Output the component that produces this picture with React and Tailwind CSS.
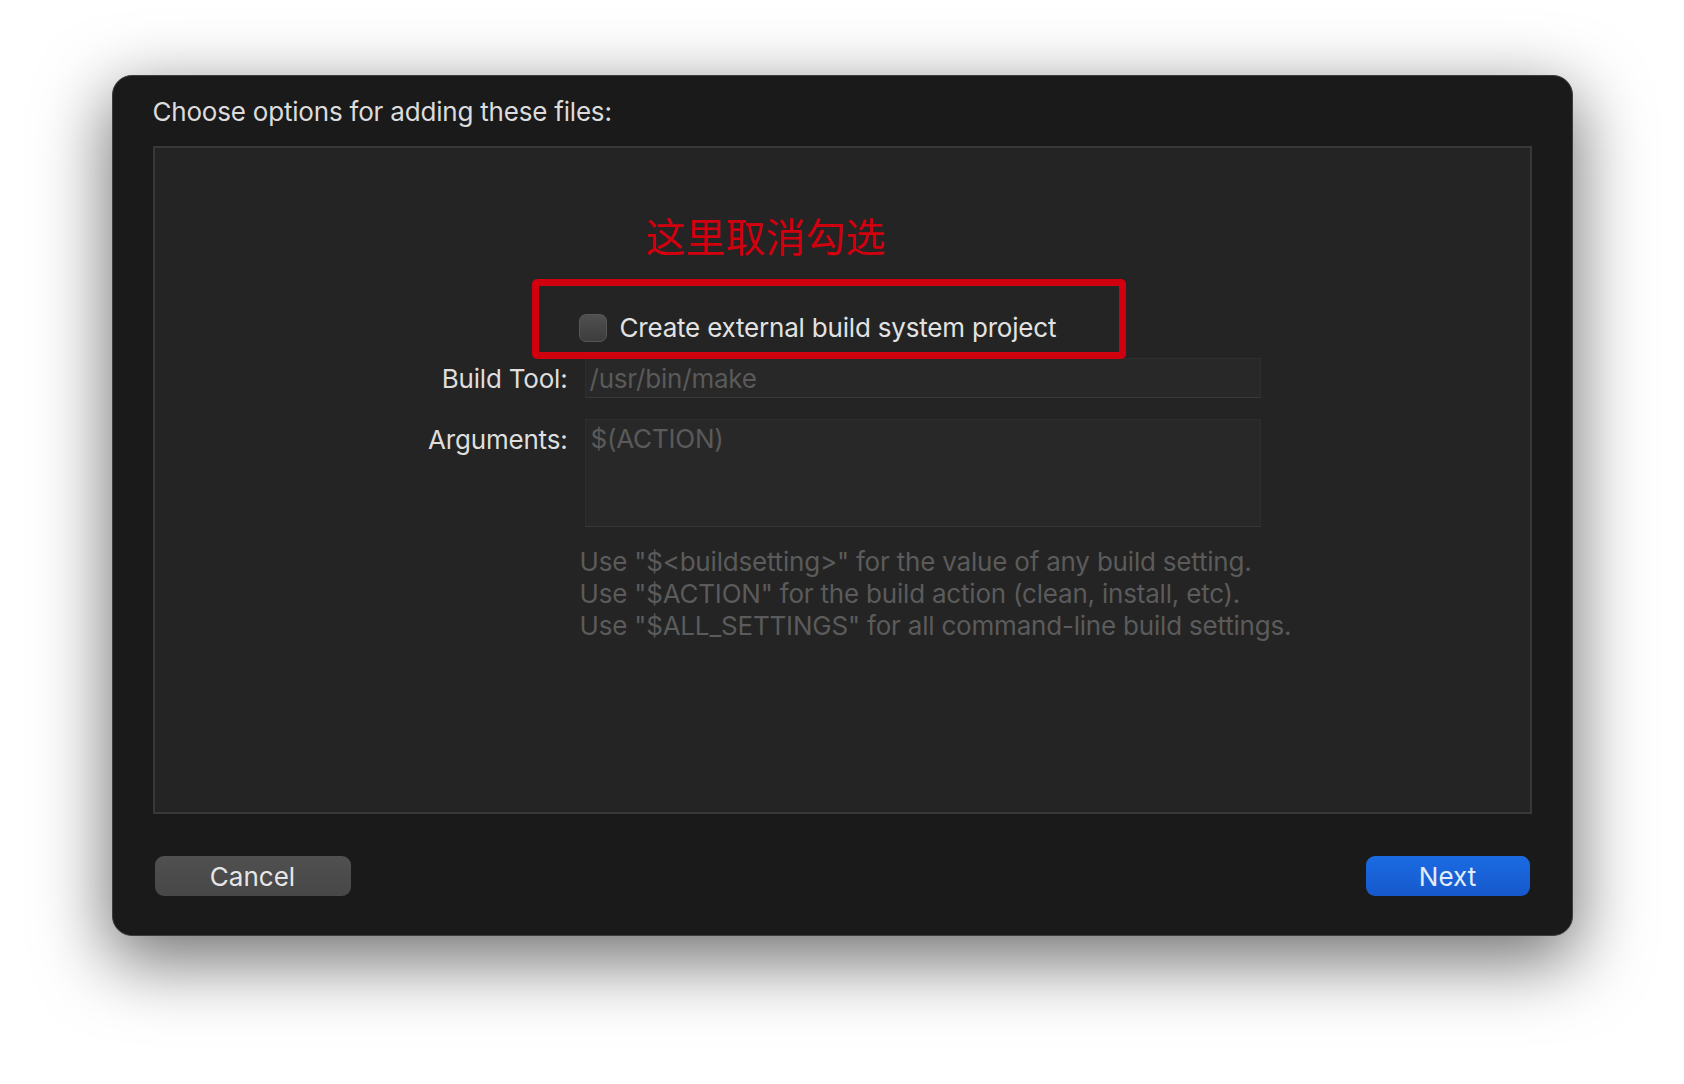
import { useState } from "react";

const font = "font-['Inter','Noto_Sans_CJK_SC',sans-serif]";

const App = () => {
  const [external, setExternal] = useState(false);
  const [buildTool, setBuildTool] = useState("");
  const [args, setArgs] = useState("");

  return (
    <div className={`w-full min-h-[1084px] bg-white pt-[75px] ${font}`}>
      <div className="mx-auto w-[1461px] h-[861px] flex flex-col rounded-[20px] border border-[#3e3e3e] bg-[#1b1a1b] px-[40px] shadow-[0_22px_70px_4px_rgba(0,0,0,0.55)]">
        {/* Title */}
        <div className="pt-[20px] h-[52px] text-[26px] leading-[32px] text-[#dcdcdc] tracking-[-0.2px]">
          Choose options for adding these files:
        </div>

        {/* Options panel */}
        <div className="relative mt-[18px] h-[668px] border-2 border-[#383838] bg-[#242424]">
          <div className="pt-[67px] pl-[491px] h-[107px] text-[40px] leading-[40px] text-[#d0000f] font-['Noto_Sans_CJK_SC',sans-serif]">
            这里取消勾选
          </div>

          <div className="ml-[270px] mt-[59px] grid grid-cols-[143px_676px] gap-x-[17px] items-start">
            {/* checkbox row */}
            <div />
            <label className="-ml-[6px] flex items-center gap-[13px] h-[28px] cursor-pointer">
              <input
                type="checkbox"
                checked={external}
                onChange={(e) => setExternal(e.target.checked)}
                className="sr-only"
              />
              <span className="w-[28px] h-[28px] rounded-[7px] border border-[#575757] bg-gradient-to-b from-[#505050] to-[#3d3d3d]" />
              <span className="text-[26px] leading-[28px] text-[#e2e2e2] tracking-[-0.2px]">
                Create external build system project
              </span>
            </label>

            {/* Build tool */}
            <div className="mt-[16px] pt-[1px] h-[40px] flex items-center justify-end text-[26px] text-[#dedede] tracking-[-0.2px]">
              Build Tool:
            </div>
            <input
              value={buildTool}
              onChange={(e) => setBuildTool(e.target.value)}
              placeholder="/usr/bin/make"
              className="mt-[16px] h-[40px] w-full bg-[#282828] border border-[#2e2e2e] border-b-[#383838] pl-[4px] pt-[1px] text-[26px] text-[#dedede] placeholder:text-[#5a5a5a] outline-none tracking-[-0.2px]"
            />

            {/* Arguments */}
            <div className="mt-[21px] h-[40px] flex items-center justify-end text-[26px] text-[#dedede] tracking-[-0.2px]">
              Arguments:
            </div>
            <textarea
              value={args}
              onChange={(e) => setArgs(e.target.value)}
              placeholder="$(ACTION)"
              className="mt-[21px] h-[108px] w-full resize-none bg-[#282828] border border-[#2e2e2e] border-b-[#383838] pl-[5px] pt-[1px] text-[26px] leading-[36px] text-[#dedede] placeholder:text-[#5a5a5a] outline-none tracking-[-0.2px]"
            />

            {/* Help */}
            <div />
            <div className="-ml-[5px] mt-[19px] w-[760px] text-[26px] leading-[32px] text-[#5b5b5b] tracking-[-0.2px]">
              <p>Use "$&lt;buildsetting&gt;" for the value of any build setting.</p>
              <p>Use "$ACTION" for the build action (clean, install, etc).</p>
              <p>Use "$ALL_SETTINGS" for all command-line build settings.</p>
            </div>
          </div>

          {/* annotation box */}
          <div className="absolute left-[377px] top-[131px] w-[594px] h-[80px] rounded-[5px] border-[7px] border-[#d0000f] pointer-events-none" />
        </div>

        {/* Buttons */}
        <div className="mt-[42px] flex justify-between">
          <button className="w-[196px] h-[40px] rounded-[9px] bg-gradient-to-b from-[#505050] to-[#474747] text-[26px] text-[#e6e6e6] ml-[2px]">
            Cancel
          </button>
          <button className="w-[164px] h-[40px] rounded-[9px] bg-gradient-to-b from-[#1b6be2] to-[#1659cc] text-[26px] text-[#e3ecfb] mr-[2px]">
            Next
          </button>
        </div>
      </div>
    </div>
  );
};

export default App;
